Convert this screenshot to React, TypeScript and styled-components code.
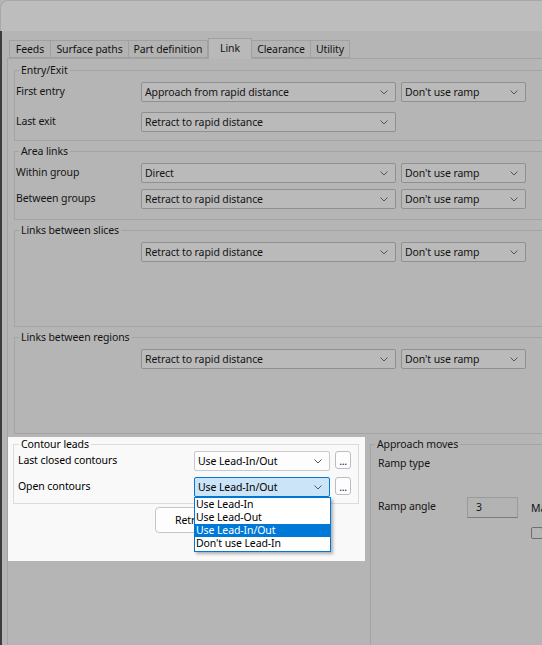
import styled, { createGlobalStyle } from "styled-components";

const GlobalStyle = createGlobalStyle`
  html, body {
    margin: 0;
    padding: 0;
    background: #b5b5b5;
  }
  body {
    font-family: "Noto Sans", "Segoe UI", sans-serif;
    font-size: 10.5px;
    letter-spacing: -0.1px;
    color: #141414;
  }
  * {
    box-sizing: border-box;
  }
`;

const Window = styled.div`
  width: 542px;
  height: 645px;
  overflow: hidden;
  background: #b5b5b5;
  display: flex;
  flex-direction: column;
`;

const TitleBar = styled.div`
  height: 31px;
  flex: none;
  background: #bdbdbd;
  border-top-left-radius: 8px;
  border-top: 1px solid #a8a8a8;
  border-left: 1px solid #a8a8a8;
`;

const Body = styled.div`
  flex: 1;
  border-left: 2px solid #3c3c3c;
  padding: 9px 0 0 5px;
  display: flex;
  flex-direction: column;
`;

const TabStrip = styled.div`
  display: flex;
  align-items: flex-end;
  height: 18px;
  padding-left: 2px;
  position: relative;
  z-index: 1;
`;

const Tab = styled.div<{ $w: number; $active?: boolean }>`
  width: ${(p) => p.$w}px;
  height: ${(p) => (p.$active ? 21 : 18)}px;
  margin-bottom: ${(p) => (p.$active ? -1 : 0)}px;
  background: ${(p) => (p.$active ? "#b9b9b9" : "#b3b3b3")};
  border: 1px solid #a0a0a0;
  border-bottom: ${(p) => (p.$active ? "none" : "1px solid #a0a0a0")};
  border-left-width: ${(p) => (p.$active ? 1 : 0)}px;
  &:first-child {
    border-left-width: 1px;
  }
  display: flex;
  justify-content: center;
  align-items: ${(p) => (p.$active ? "flex-start" : "center")};
  padding-top: ${(p) => (p.$active ? 1 : 0)}px;
  line-height: 16px;
  white-space: nowrap;
`;

const Pane = styled.div`
  flex: 1;
  border-left: 1px solid #a3a3a3;
  border-top: 1px solid #a3a3a3;
  background: #b5b5b5;
  display: flex;
  flex-direction: column;
  gap: 2px;
  padding-top: 3px;
`;

const Group = styled.fieldset<{ $h: number }>`
  margin: 0 0 0 6px;
  width: 560px;
  height: ${(p) => p.$h}px;
  flex: none;
  border: 1px solid #a4a4a4;
  padding: 4px 0 0 1px;
  display: flex;
  flex-direction: column;
  gap: ${(p) => (p.$h < 78 ? 6 : 10)}px;
`;

const Legend = styled.legend<{ $indent: number }>`
  margin-left: ${(p) => p.$indent}px;
  padding: 0 2px;
  line-height: 16px;
`;

const Row = styled.div`
  display: flex;
  align-items: center;
  height: 20px;
`;

const Label = styled.div<{ $w: number }>`
  width: ${(p) => p.$w}px;
  flex: none;
  white-space: nowrap;
  margin-top: -3px;
`;

const Combo = styled.div<{ $w: number; $tone?: "dim" | "light" | "focus" }>`
  position: relative;
  width: ${(p) => p.$w}px;
  height: 20px;
  flex: none;
  margin-right: 5px;
  display: flex;
  align-items: center;
  justify-content: space-between;
  padding: 0 7px 0 3px;
  border-radius: 2px;
  white-space: nowrap;
  background: ${(p) =>
    p.$tone === "focus" ? "#cce4f7" : p.$tone === "light" ? "#fdfdfd" : "#bababa"};
  border: 1px solid
    ${(p) =>
      p.$tone === "focus" ? "#0078d7" : p.$tone === "light" ? "#c9c9c9" : "#909090"};
  color: ${(p) => (p.$tone === "dim" || !p.$tone ? "#141414" : "#000")};
`;

const Chevron = () => (
  <svg width="8" height="5" viewBox="0 0 8 5">
    <polyline points="0.5,0.5 4,4 7.5,0.5" fill="none" stroke="#555" strokeWidth="1" />
  </svg>
);

const DotsButton = styled.div`
  width: 16px;
  height: 18px;
  margin-top: -2px;
  flex: none;
  border: 1px solid #bdbdbd;
  border-radius: 3px;
  background: #fdfdfd;
  font-size: 11px;
  line-height: 18px;
  text-align: center;
  color: #1a1a6a;
  letter-spacing: -0.5px;
`;

const DropList = styled.div`
  position: absolute;
  top: 19px;
  left: -1px;
  width: 137px;
  background: #fff;
  border: 1px solid #0078d7;
  box-shadow: 2px 2px 3px rgba(0, 0, 0, 0.3);
  z-index: 5;
  padding: 0 0 1px;
`;

const DropItem = styled.div<{ $sel?: boolean }>`
  height: 13px;
  line-height: 13px;
  padding-left: 1px;
  background: ${(p) => (p.$sel ? "#0078d7" : "#fff")};
  color: ${(p) => (p.$sel ? "#fff" : "#000")};
`;

const BottomRow = styled.div`
  display: flex;
  margin-top: 1px;
  gap: 5px;
`;

const Highlight = styled.div`
  width: 357px;
  height: 124px;
  flex: none;
  background: #f9f9f9;
  padding: 0 0 0 5px;
  color: #000;
`;

const LightGroup = styled.fieldset`
  margin: 0;
  width: 346px;
  height: 67px;
  border: 1px solid #dcdcdc;
  padding: 0 0 0 4px;
  display: flex;
  flex-direction: column;
  gap: 6px;
`;

const SmallLegend = styled(Legend)`
  line-height: 14px;
`;

const PushButton = styled.div`
  margin: 3px 0 0 142px;
  width: 100px;
  height: 26px;
  border: 1px solid #c6c6c6;
  border-radius: 4px;
  background: #fdfdfd;
  line-height: 24px;
  padding-left: 19px;
`;

const ApproachGroup = styled.fieldset`
  margin: 0;
  width: 300px;
  height: 300px;
  border: 1px solid #a4a4a4;
  padding: 5px 0 0 7px;
  display: flex;
  flex-direction: column;
`;

const SimpleRow = styled.div<{ $top: number }>`
  display: flex;
  align-items: center;
  margin-top: ${(p) => p.$top}px;
  white-space: nowrap;
`;

const NumBox = styled.div`
  width: 51px;
  height: 21px;
  border: 1px solid #9a9a9a;
  border-bottom-color: #7c7c7c;
  background: #b3b3b3;
  padding-left: 8px;
  line-height: 19px;
  margin-right: 13px;
  flex: none;
`;

const CheckBox = styled.div`
  width: 12px;
  height: 12px;
  margin-left: 153px;
  border: 1px solid #6e6e6e;
  border-radius: 2px;
`;

type Line = { label?: string; main: string; ramp?: string };

const DimGroup = ({ title, h, lines }: { title: string; h: number; lines: Line[] }) => (
  <Group $h={h}>
    <Legend $indent={3}>{title}</Legend>
    {lines.map((l, i) => (
      <Row key={i}>
        <Label $w={125}>{l.label}</Label>
        <Combo $w={255}>
          <span>{l.main}</span>
          <Chevron />
        </Combo>
        {l.ramp && (
          <Combo $w={125}>
            <span>{l.ramp}</span>
            <Chevron />
          </Combo>
        )}
      </Row>
    ))}
  </Group>
);

export default function App() {
  const rapid = "Retract to rapid distance";
  const ramp = "Don't use ramp";
  return (
    <>
      <GlobalStyle />
      <Window>
        <TitleBar />
        <Body>
          <TabStrip>
            <Tab $w={42}>Feeds</Tab>
            <Tab $w={78}>Surface paths</Tab>
            <Tab $w={79}>Part definition</Tab>
            <Tab $w={44} $active>
              Link
            </Tab>
            <Tab $w={59}>Clearance</Tab>
            <Tab $w={39}>Utility</Tab>
          </TabStrip>
          <Pane>
            <DimGroup
              title="Entry/Exit"
              h={79}
              lines={[
                { label: "First entry", main: "Approach from rapid distance", ramp },
                { label: "Last exit", main: rapid },
              ]}
            />
            <DimGroup
              title="Area links"
              h={77}
              lines={[
                { label: "Within group", main: "Direct", ramp },
                { label: "Between groups", main: rapid, ramp },
              ]}
            />
            <DimGroup title="Links between slices" h={105} lines={[{ main: rapid, ramp }]} />
            <DimGroup title="Links between regions" h={105} lines={[{ main: rapid, ramp }]} />
            <BottomRow>
              <Highlight>
                <LightGroup>
                  <SmallLegend $indent={1}>Contour leads</SmallLegend>
                  <Row>
                    <Label $w={176}>Last closed contours</Label>
                    <Combo $w={136} $tone="light">
                      <span>Use Lead-In/Out</span>
                      <Chevron />
                    </Combo>
                    <DotsButton>...</DotsButton>
                  </Row>
                  <Row>
                    <Label $w={176}>Open contours</Label>
                    <Combo $w={136} $tone="focus">
                      <span>Use Lead-In/Out</span>
                      <Chevron />
                      <DropList>
                        <DropItem>Use Lead-In</DropItem>
                        <DropItem>Use Lead-Out</DropItem>
                        <DropItem $sel>Use Lead-In/Out</DropItem>
                        <DropItem>Don't use Lead-In</DropItem>
                      </DropList>
                    </Combo>
                    <DotsButton>...</DotsButton>
                  </Row>
                </LightGroup>
                <PushButton>Retract</PushButton>
              </Highlight>
              <ApproachGroup>
                <SmallLegend $indent={-3}>Approach moves</SmallLegend>
                <SimpleRow $top={0}>Ramp type</SimpleRow>
                <SimpleRow $top={27}>
                  <Label $w={89}>Ramp angle</Label>
                  <NumBox>3</NumBox>
                  <span>Max</span>
                </SimpleRow>
                <SimpleRow $top={9}>
                  <CheckBox />
                </SimpleRow>
              </ApproachGroup>
            </BottomRow>
          </Pane>
        </Body>
      </Window>
    </>
  );
}
